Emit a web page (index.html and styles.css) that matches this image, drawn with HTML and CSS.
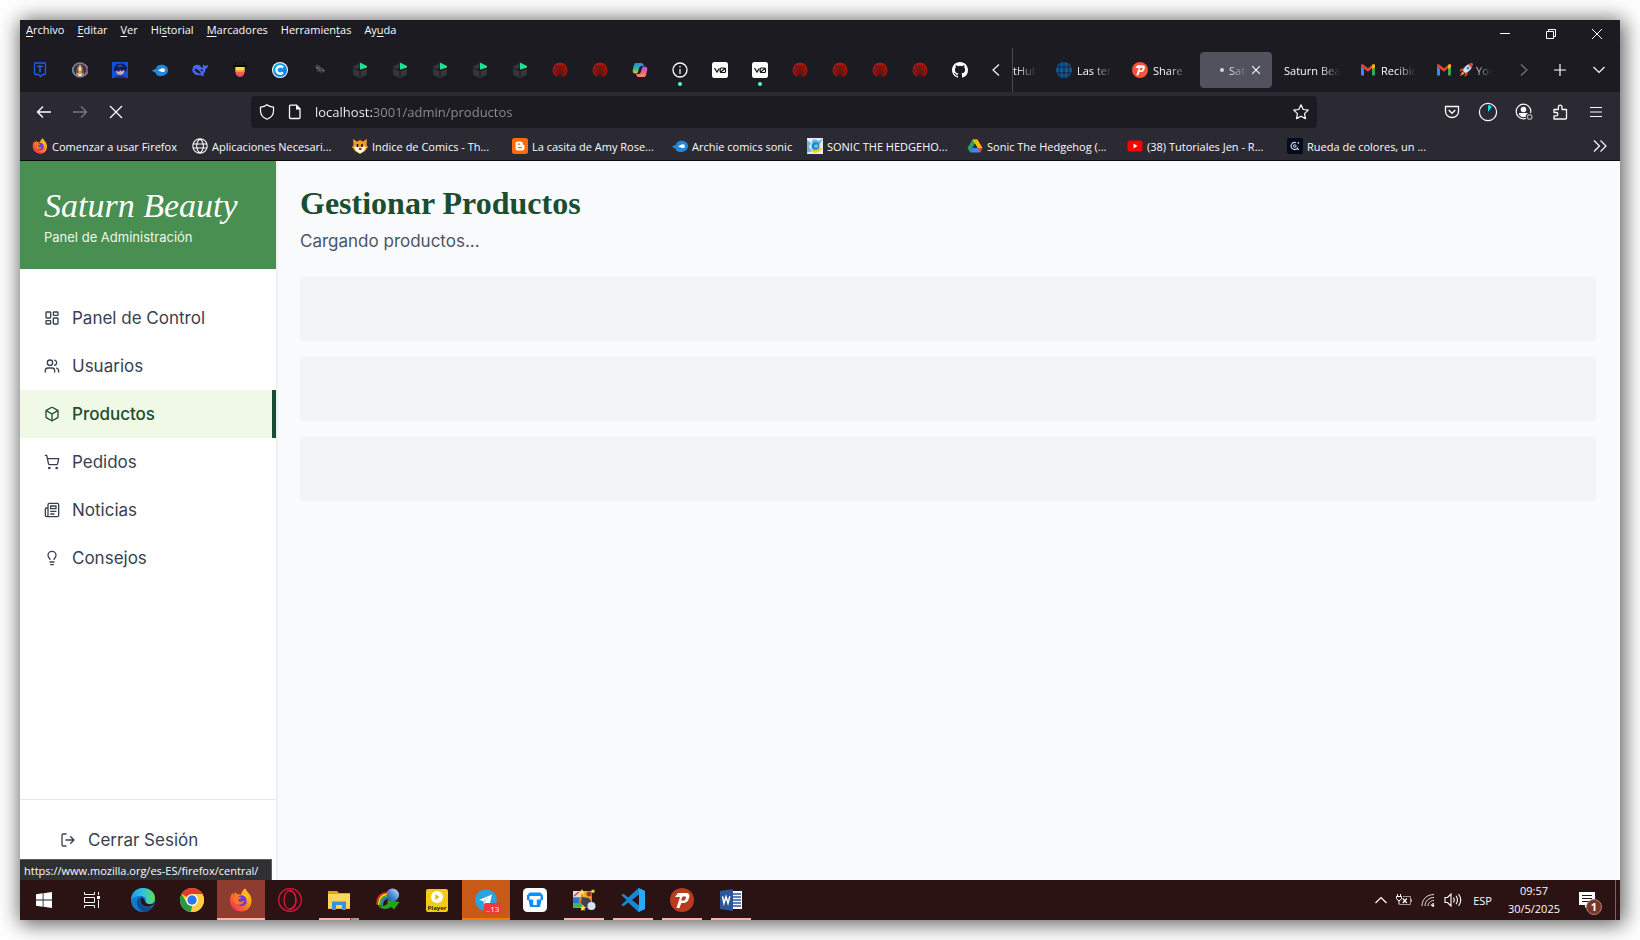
FILE: index.html
```html
<!DOCTYPE html>
<html lang="es">
<head>
<meta charset="utf-8">
<title>Saturn Beauty - Panel de Administración</title>
<link rel="stylesheet" href="styles.css">
</head>
<body>
<svg class="defs" aria-hidden="true">
  <defs>
    <linearGradient id="g-ff" x1="1" y1="0" x2="0" y2="1"><stop offset="0" stop-color="#ffe226"/><stop offset=".45" stop-color="#ff8a16"/><stop offset="1" stop-color="#f5156c"/></linearGradient>
    <linearGradient id="g-edge" x1="0" y1="0" x2="1" y2="0"><stop offset="0" stop-color="#1b9de2"/><stop offset=".5" stop-color="#2fc2df"/><stop offset="1" stop-color="#62dc58"/></linearGradient>
    <linearGradient id="g-cop1" x1="0" y1="0" x2="0" y2="1"><stop offset="0" stop-color="#1c8df0"/><stop offset=".55" stop-color="#35b98d"/><stop offset="1" stop-color="#e8c31e"/></linearGradient>
    <linearGradient id="g-cop2" x1="0" y1="0" x2="0" y2="1"><stop offset="0" stop-color="#a45cf0"/><stop offset=".5" stop-color="#ea5b9a"/><stop offset="1" stop-color="#f9955a"/></linearGradient>
    <linearGradient id="g-globe" x1="1" y1="0" x2="0" y2="1"><stop offset="0" stop-color="#d5ecff"/><stop offset=".5" stop-color="#4d8fd8"/><stop offset="1" stop-color="#1b4a94"/></linearGradient>
    <linearGradient id="g-c" x1="0" y1="0" x2="1" y2="1"><stop offset="0" stop-color="#0bb0f6"/><stop offset="1" stop-color="#0673e0"/></linearGradient>
  </defs>
  <symbol id="box3d" viewBox="0 0 16 16"><path d="M1 4.500 7.500 1v5L4.500 7.200 1 5.800zM1 6.800l6.500 2.500V16L1 12.800zM8.500 9.300 15 6.800v6L8.500 16z" fill="#363638"/><path d="M8 .5 15 4v1.500L8 7.800z" fill="#1fe08f"/></symbol>
  <symbol id="shell" viewBox="0 0 16 16"><path d="M3.500 14A7.500 7.500 0 1 1 12.500 14L11 15H5z" fill="#b4150b"/><path d="M1.300 6.500 5.500 15M3.800 3 6.600 15M6.700 3 7.500 15M9.300 3 8.500 15M12.200 3 9.400 15M14.700 6.500 10.500 15" stroke="#24161a" stroke-width=".9" fill="none"/></symbol>
  <symbol id="vzero" viewBox="0 0 16 16"><rect width="16" height="16" rx="2.500" fill="#fff"/><path d="M2.500 6 5 10 7.200 6.500M9.200 6h3.300a1 1 0 0 1 1 1v2.500a1 1 0 0 1-1 1H9.200a1 1 0 0 1-1-1V7a1 1 0 0 1 1-1zM8.500 10.200l4.700-4" fill="none" stroke="#111" stroke-width="1.200"/></symbol>
  <symbol id="comet" viewBox="0 0 16 16"><path d="M0 8.500 5 6C3.500 6 4.500 4 7 3.200 12 1.700 16 4.500 16 8s-3 6-7.500 6C5.500 14 3.500 12 4 11L1 9.500z" fill="#2587d8"/><path d="M6 8.200C8.500 7.200 9.500 6.300 11 6.300a1.900 1.900 0 1 1 0 3.800C9.500 10.100 8.500 9.300 6 8.200z" fill="#fff"/></symbol>
  <symbol id="gmail" viewBox="0 0 16 16"><path d="M1 4v9.500h3V7z" fill="#4285f4"/><path d="M12 7v6.500h3V4z" fill="#34a853"/><path d="M1 3.500C1 2 2.700 2 3.500 2.700L8 6.200l4.500-3.500C13.400 2 15 2 15 3.600L8 9.800 1 4.500z" fill="#ea4335"/><path d="M12 3.100C13.500 1.800 15 2.200 15 4v1L12 7.300z" fill="#fbbc04"/></symbol>
  <symbol id="firefox" viewBox="0 0 24 24"><path d="M16.500.5c.5 2.700 3 4 4.500 6.500C25 15 20.500 23.500 12.500 23.500 5.500 23.500 1 18.500 1 12.500 1 9.500 2 7 3.500 4.500l.7 2.700C5 5.500 6 4.500 7.200 4l.3 2.500c1.700-.7 3.300-.2 4.500.3C12 4.500 14 1.500 16.500.5z" fill="url(#g-ff)"/><circle cx="12.500" cy="12.800" r="5.500" fill="#743bd3"/><path d="M4.500 8c2.500-1 4 .5 7.500 1.200 1 .8-2.500 1.500-3 2.800 1 2.500 4 2 6.500 1-1.500 4.500-7.500 5-10.500 1z" fill="#ff751d"/><path d="M13 6.500c4 .7 5.500 4 4.500 7.500 2.500-2 2-6-1-9z" fill="#ffc21e"/></symbol>
  <symbol id="parrot" viewBox="0 0 24 24"><path d="M8 5h8.500a3 3 0 0 1 2.800 4l-1 3a4.500 4.500 0 0 1-4 3h-3L9.500 20H6.500L10 9H5M12.500 8.500l-1.500 4h2.700c1 0 1.500-.6 1.800-1.500l.5-1.300c.2-.8-.2-1.200-1-1.200z" fill="#fff" fill-rule="evenodd"/></symbol>
</svg>

<div class="window">
  <header class="menubar">
    <nav class="menus" aria-label="Menú">
      <button><u>A</u>rchivo</button><button><u>E</u>ditar</button><button><u>V</u>er</button><button>Hi<u>s</u>torial</button><button><u>M</u>arcadores</button><button>Herramien<u>t</u>as</button><button>Ay<u>u</u>da</button>
    </nav>
    <div class="caption">
      <button aria-label="Minimizar"><svg width="10" height="10" viewBox="0 0 10 10"><path d="M0 4.500h10" stroke="#fff"/></svg></button>
      <button aria-label="Restaurar"><svg width="10" height="10" viewBox="0 0 10 10"><path d="M.5 2.500h7v7h-7zM2.500 2.500v-2h7v7h-2" fill="none" stroke="#fff"/></svg></button>
      <button aria-label="Cerrar"><svg width="10" height="10" viewBox="0 0 10 10"><path d="M0 0 10 10M10 0 0 10" stroke="#fff"/></svg></button>
    </div>
  </header>

  <div class="tabstrip">
    <div class="pinned">
      <button aria-label="T"><svg class="i16" viewBox="0 0 16 16"><path d="M3.500 1h9a1 1 0 0 1 1 1v9.500a1 1 0 0 1-1 1H10.500L8.500 14.800 6.500 12.500H3.500a1 1 0 0 1-1-1V2a1 1 0 0 1 1-1z" fill="none" stroke="#1f5fe8" stroke-width="1.300"/><path d="M5.200 4.200h5.600M8 4.200v6.300" stroke="#1f5fe8" stroke-width="1.600"/></svg></button>
      <button aria-label="Retrato"><svg class="i16" viewBox="0 0 16 16"><circle cx="8" cy="8" r="7" fill="#35303c" stroke="#8d74a8" stroke-width="1.500"/><path d="M3 13a6 6 0 0 1 0-10" fill="none" stroke="#4cae83" stroke-width="1"/><path d="M13 13.500a6 6 0 0 0 0-11" fill="none" stroke="#c9657a" stroke-width="1"/><path d="M4 13C5 10 4 3 8 2.500c4 .5 3 7.500 4 10.500L8 14z" fill="#c09c58"/><path d="M5.500 11C6 8 5.500 5 7 4M10.500 11C10 8 10.500 5 9 4" fill="none" stroke="#4a3a30"/><ellipse cx="8" cy="6.800" rx="1.500" ry="2.200" fill="#f3d6c2"/><path d="M6 14c.5-3 3.500-3 4 0z" fill="#f6efe9"/></svg></button>
      <button aria-label="Anime"><svg class="i16" viewBox="0 0 16 16"><path d="M0 0h16v16H0z" fill="#1750d8"/><path d="M1.500 7 4.500 2l7-.5 3.500 4-1 4-6-2-5 2z" fill="#12194e"/><path d="M5 3.500 9 3M6 5l5-1" stroke="#3a62d0" stroke-width=".8"/><path d="M4 8.500 12.500 8l-1 3.500-3 1.500L5 12z" fill="#d9a9a8"/><path d="M3 7.500 7 10l1-2 2 1.500L13 6.500l-1 1-3-1-5 1z" fill="#1c2463"/><path d="M2 16c1-3 11-3 12 0z" fill="#21307a"/></svg></button>
      <button aria-label="Cometa"><svg class="i16"><use href="#comet"/></svg></button>
      <button aria-label="Ballena"><svg class="i16" viewBox="0 0 16 16"><path d="M1 5c1-2.500 5-3 7-1.500C8.500 5 10 6 11 5.500 10.500 4 11 3 11.500 2.500c.5 1 1.500 1.300 2 1.300L16 3c0 2-1 3.500-2.500 4 0 2.500-1 4-2.500 5l1.500 1.200C11 14.500 9 13.500 8 13 4 14 0 11 .3 7.500z" fill="#4a66f5"/><path d="M2.500 6.500C5 6.300 7.500 9 9 11.200 6 12 2.800 10 2.500 6.500z" fill="#1c1b22"/><circle cx="9.700" cy="8.300" r="1" fill="#1c1b22"/></svg></button>
      <button aria-label="Vaso"><svg class="i16" viewBox="0 0 16 16"><path d="M1 4h14M3 1.500h1M11 1.500h1" stroke="#050505" stroke-width="1.500"/><path d="M3.500 5h9v5a4.500 5 0 0 1-9 0z" fill="#f35462"/><path d="M3.500 5h9v3.500h-9z" fill="#ffe52e"/><path d="M3.500 8.500h9v1.700h-9z" fill="#ff9b45"/></svg></button>
      <button aria-label="C"><svg class="i16" viewBox="0 0 16 16"><circle cx="8" cy="8" r="8" fill="#fff"/><circle cx="8" cy="8" r="7" fill="url(#g-c)"/><path d="M11 5.600A3.700 3.700 0 1 0 11 10.400" fill="none" stroke="#fff" stroke-width="2.400"/></svg></button>
      <button aria-label="Dragón"><svg class="i16" viewBox="0 0 16 16"><path d="M3.500 4.500 6 3.500l2.500 2 1 3.500 3-1-1.500 2.500M4 7l3-1M5 9.500l2.500-2 1 3M7 5v4M10 6l1 2M4 5.500h3" fill="none" stroke="#66656b" stroke-width="1"/></svg></button>
      <button aria-label="Caja"><svg class="i16"><use href="#box3d"/></svg></button>
      <button aria-label="Caja"><svg class="i16"><use href="#box3d"/></svg></button>
      <button aria-label="Caja"><svg class="i16"><use href="#box3d"/></svg></button>
      <button aria-label="Caja"><svg class="i16"><use href="#box3d"/></svg></button>
      <button aria-label="Caja"><svg class="i16"><use href="#box3d"/></svg></button>
      <button aria-label="Concha"><svg class="i16"><use href="#shell"/></svg></button>
      <button aria-label="Concha"><svg class="i16"><use href="#shell"/></svg></button>
      <button aria-label="Copilot"><svg class="i16" viewBox="0 0 16 16"><path d="M4 1h5.500c1.500 0 2 1.500 2.500 3H9.500C8 4 7.500 5 7 6.500L6 10c-.5 1-1 1.500-2.500 1.500C1 11.500.3 10 .8 8l1-4.500C2.200 2 2.700 1 4 1z" fill="url(#g-cop1)"/><path d="M12 15H6.500C5 15 4.500 13.500 4 12h2.500C8 12 8.500 11 9 9.500L10 6c.5-1 1-1.500 2.500-1.500C15 4.500 15.700 6 15.200 8l-1 4.500C13.800 14 13.300 15 12 15z" fill="url(#g-cop2)"/></svg></button>
      <button class="alert" aria-label="Información"><svg class="i16" viewBox="0 0 16 16"><circle cx="8" cy="8" r="7" fill="none" stroke="#fbfbfe" stroke-width="1.300"/><path d="M8 7v5M8 4v1.500" stroke="#fbfbfe" stroke-width="1.200"/></svg></button>
      <button aria-label="v0"><svg class="i16"><use href="#vzero"/></svg></button>
      <button class="alert" aria-label="v0"><svg class="i16"><use href="#vzero"/></svg></button>
      <button aria-label="Concha"><svg class="i16"><use href="#shell"/></svg></button>
      <button aria-label="Concha"><svg class="i16"><use href="#shell"/></svg></button>
      <button aria-label="Concha"><svg class="i16"><use href="#shell"/></svg></button>
      <button aria-label="Concha"><svg class="i16"><use href="#shell"/></svg></button>
      <button aria-label="GitHub"><svg class="i16" viewBox="0 0 16 16"><path fill="#fff" d="M8 0C3.580 0 0 3.580 0 8c0 3.540 2.290 6.530 5.470 7.590.4.070.55-.17.55-.38 0-.19-.01-.82-.01-1.490-2.010.37-2.530-.49-2.690-.94-.09-.23-.48-.94-.82-1.130-.28-.15-.68-.52-.01-.53.63-.01 1.080.58 1.230.82.72 1.210 1.870.87 2.330.66.07-.52.28-.87.51-1.070-1.780-.2-3.640-.89-3.640-3.950 0-.87.31-1.590.82-2.150-.08-.2-.36-1.020.08-2.120 0 0 .67-.21 2.200.82a7.500 7.500 0 0 1 4 0c1.530-1.040 2.200-.82 2.200-.82.44 1.100.16 1.920.08 2.120.51.56.82 1.270.82 2.150 0 3.070-1.870 3.750-3.650 3.950.29.25.54.73.54 1.480 0 1.070-.01 1.930-.01 2.200 0 .21.15.46.55.38A8 8 0 0 0 16 8c0-4.420-3.580-8-8-8z"/></svg></button>
    </div>
    <button class="scroll" aria-label="Desplazar a la izquierda"><svg width="8" height="12" viewBox="0 0 8 12"><path d="M7 .5 1 6l6 5.500" fill="none" stroke="#fbfbfe" stroke-width="1.200"/></svg></button>
    <div class="tabs">
      <button class="tab first"><span class="fade">tHub</span></button>
      <button class="tab"><svg class="i16" viewBox="0 0 16 16"><circle cx="8" cy="8" r="8" fill="#0c5a9b"/><path d="M0 5h16M0 11h16M8 0v16M4 1.500q-2 6.500 0 13M12 1.500q2 6.500 0 13" fill="none" stroke="#1c1b22" stroke-width=".8"/></svg><span class="fade">Las ten</span></button>
      <button class="tab"><svg class="i16" viewBox="0 0 24 24"><circle cx="12" cy="12" r="12" fill="#f2553d"/><use href="#parrot"/></svg><span class="fade">Share</span></button>
      <button class="tab active"><i class="dot"></i><span class="fade">Satur</span><svg width="8" height="8" viewBox="0 0 8 8"><path d="M0 0 8 8M8 0 0 8" stroke="#fbfbfe" stroke-width="1.100"/></svg></button>
      <button class="tab"><span class="fade">Saturn Beau</span></button>
      <button class="tab"><svg class="i16"><use href="#gmail"/></svg><span class="fade">Recibid</span></button>
      <button class="tab"><svg class="i16"><use href="#gmail"/></svg><svg class="rocket" width="14" height="14" viewBox="0 0 14 14"><path d="M13.500.5C9 .5 6 3 3.500 7.500l3 3C11 8 13.500 5 13.500.5z" fill="#d7e2e8"/><path d="M13.500.5c-2 0-3 .2-4.500 1l3.500 3.500c.8-1.500 1-2.500 1-4.500zM5.500 4.500 1.500 6 .5 9l4-2zM9.500 8.500 8 12.500l-3 1 2-4z" fill="#e2432e"/><circle cx="9" cy="5" r="1.500" fill="#2693e6"/><path d="M3.500 8.500 1 13l4.500-2.500z" fill="#ffb02e"/></svg><span class="fade">You</span></button>
    </div>
    <button class="tool" aria-label="Desplazar a la derecha"><svg width="8" height="12" viewBox="0 0 8 12"><path d="M1 .5 7 6l-6 5.500" fill="none" stroke="#77767e" stroke-width="1.200"/></svg></button>
    <button class="tool" aria-label="Nueva pestaña"><svg width="12" height="12" viewBox="0 0 12 12"><path d="M6 0v12M0 6h12" stroke="#fbfbfe" stroke-width="1.200"/></svg></button>
    <button class="tool wide" aria-label="Listar pestañas"><svg width="12" height="8" viewBox="0 0 12 8"><path d="M.5 1 6 6.500 11.500 1" fill="none" stroke="#fbfbfe" stroke-width="1.200"/></svg></button>
  </div>

  <div class="navbar">
    <div class="navbtns">
      <button aria-label="Atrás"><svg class="i16" viewBox="0 0 16 16"><path d="M15 8H1.500M7 2.500 1.500 8 7 13.500" fill="none" stroke="#fbfbfe" stroke-width="1.400"/></svg></button>
      <button aria-label="Adelante"><svg class="i16" viewBox="0 0 16 16"><path d="M1 8h13.500M9 2.500 14.500 8 9 13.500" fill="none" stroke="#77767e" stroke-width="1.400"/></svg></button>
      <button aria-label="Detener"><svg class="i16" viewBox="0 0 16 16"><path d="M2 2l12 12M14 2 2 14" stroke="#fbfbfe" stroke-width="1.300"/></svg></button>
    </div>
    <div class="urlbar">
      <svg class="i16" viewBox="0 0 16 16"><path d="M8 .8C6.300 2.300 4 3 1.500 3.200V7c0 4 2.500 6.700 6.500 8.300C12 13.700 14.500 11 14.500 7V3.200C12 3 9.700 2.300 8 .8z" fill="none" stroke="#fbfbfe" stroke-width="1.200"/></svg>
      <svg class="i16" viewBox="0 0 16 16"><path d="M3.500 1.200H9.500L13 4.700V13.500a1 1 0 0 1-1 1H3.500a1 1 0 0 1-1-1v-11.300a1 1 0 0 1 1-1z" fill="none" stroke="#fbfbfe" stroke-width="1.300"/><path d="M9 1v4.500h4.500z" fill="#fbfbfe"/></svg>
      <input class="url" type="text" aria-label="Dirección" value="localhost:3001/admin/productos">
      <button aria-label="Añadir a marcadores"><svg class="i16" viewBox="0 0 16 16"><path d="m8 .8 2.200 4.700 5.100.6-3.800 3.500 1 5L8 12.200l-4.500 2.400 1-5L.7 6.100l5.100-.6z" fill="none" stroke="#fbfbfe" stroke-width="1.200" stroke-linejoin="round"/></svg></button>
    </div>
    <div class="actions">
      <button aria-label="Pocket"><svg class="i16" viewBox="0 0 16 16"><path d="M1.500 2.500h13V7.500a6.500 6 0 0 1-13 0z" fill="none" stroke="#fbfbfe" stroke-width="1.300" stroke-linejoin="round"/><path d="M4.700 6 8 9.200 11.300 6" fill="none" stroke="#fbfbfe" stroke-width="1.400"/></svg></button>
      <button aria-label="Progreso"><svg width="20" height="20" viewBox="0 0 20 20"><circle cx="10" cy="10" r="8.600" fill="none" stroke="#fbfbfe" stroke-width="1.200"/><path d="M10 10V3a7 7 0 0 1 4 1.500z" fill="#00ddff"/></svg></button>
      <button aria-label="Cuenta"><svg width="18" height="18" viewBox="0 0 18 18"><circle cx="8.500" cy="8.500" r="7.300" fill="none" stroke="#fbfbfe" stroke-width="1.200"/><circle cx="8.500" cy="6.500" r="2.800" fill="#fbfbfe"/><path d="M4 10h9v1.500L10.500 14h-4L4 11.500z" fill="#fbfbfe"/><circle cx="14.700" cy="14" r="4" fill="#2b2a33"/><circle cx="14.700" cy="14" r="2.300" fill="none" stroke="#a5a4ac" stroke-width="1.300"/></svg></button>
      <button aria-label="Extensiones"><svg class="i16" viewBox="0 0 16 16"><path d="M2 15h11.500a1 1 0 0 0 1-1V5.500H10V3a1.800 1.800 0 0 0-3.600 0v2.500H2V8.500h2.200a1.600 1.600 0 0 1 0 3.300H2z" fill="none" stroke="#fbfbfe" stroke-width="1.300" stroke-linejoin="round"/></svg></button>
      <button aria-label="Menú de aplicación"><svg width="12" height="12" viewBox="0 0 12 12"><path d="M0 1.500h12M0 6h12M0 10.500h12" stroke="#fbfbfe" stroke-width="1.200"/></svg></button>
    </div>
  </div>

  <div class="bookmarks">
    <a href="#"><svg class="i16"><use href="#firefox"/></svg>Comenzar a usar Firefox</a>
    <a href="#"><svg class="i16" viewBox="0 0 16 16"><path d="M8 .8a7.200 7.200 0 1 0 0 14.400A7.200 7.200 0 0 0 8 .8zM8 1C3.500 4.500 3.500 11.500 8 15M8 1c4.500 3.500 4.500 10.500 0 14M1 6h14M1 10h14" fill="none" stroke="#fbfbfe" stroke-width="1.100"/></svg>Aplicaciones Necesari...</a>
    <a href="#"><svg class="i16" viewBox="0 0 16 16"><path d="M1 1 5 3.500 8 2l3 1.500L15 1l-.5 6L16 9l-3 4-5 3-5-3-3-4 1.500-2z" fill="#f59a22"/><path d="m2 9 4-1 2 2 2-2 4 1-2 4-4 2.500L4 13z" fill="#fff6df"/><path d="M5.500 6v3M10 6v3M7 11h2.500" stroke="#191510" stroke-width="1.600"/></svg>Indice de Comics - Th...</a>
    <a href="#"><svg class="i16" viewBox="0 0 16 16"><rect width="16" height="16" rx="2.500" fill="#ff6a0c"/><path d="M5.500 3.500H8.500a2.300 2.300 0 0 1 2.300 2.300c0 .8.400 1.200 1.700 1.200v3a2.500 2.500 0 0 1-2.500 2.500h-4.500a2 2 0 0 1-2-2v-5a2 2 0 0 1 2-2z" fill="#fff"/><path d="M5.800 6.200h2.400M5.800 9.700h4" stroke="#ff6a0c" stroke-width="1.200"/></svg>La casita de Amy Rose...</a>
    <a href="#" class="short"><svg class="i16"><use href="#comet"/></svg>Archie comics sonic</a>
    <a href="#"><svg class="i16" viewBox="0 0 16 16"><path d="M0 0h16v16H0z" fill="#e5eff8"/><path d="m0 2 4 3-2 4L5 13l-5 2zM16 0l-4 3-5-2-3 3 9 2z" fill="#6fb4e5"/><circle cx="8.500" cy="8" r="4" fill="#2188d2"/><path d="M7 7.500 10 6l1.500 3L8 10z" fill="#73d0b7"/><path d="M4 10c2 3 7 3 10-1l1 2c-2 4-8 5-11 2z" fill="#f1cf24"/></svg>SONIC THE HEDGEHO...</a>
    <a href="#"><svg class="i16" viewBox="0 0 16 16"><path d="M5.500 1.500h5L5.500 10 3 14.500.5 10z" fill="#22a565"/><path d="M5.500 1.500h5l5 8.500h-5z" fill="#ffba00"/><path d="M5.500 10h10L13 14.500H3z" fill="#4285f4"/><path d="m5.500 10 2.600-4.300L10.500 10z" fill="#2b2a33"/><path d="M10.500 10h5L13 14.500z" fill="#ea4335"/></svg>Sonic The Hedgehog (...</a>
    <a href="#"><svg class="i16" viewBox="0 0 16 16"><rect y="2.500" x=".5" width="15" height="11" rx="2.500" fill="#f00"/><path d="m6.500 5.500 4 2.500-4 2.500z" fill="#fff"/></svg>(38) Tutoriales Jen - R...</a>
    <a href="#"><svg class="i16" viewBox="0 0 16 16"><rect width="16" height="16" rx="2" fill="#020a1d"/><path d="M9 4.700A3.500 3.500 0 1 0 10.800 9.500M9.500 10.500l2.500 1.200" fill="none" stroke="#d4d9e4" stroke-width="1.100"/><circle cx="7.800" cy="8" r="1.300" fill="none" stroke="#d4d9e4"/><circle cx="11.300" cy="4.800" r=".9" fill="#d4d9e4"/></svg>Rueda de colores, un ...</a>
    <button aria-label="Más marcadores"><svg width="14" height="12" viewBox="0 0 14 12"><path d="m1 .5 5.500 5.500L1 11.500M7.500.5 13 6l-5.500 5.500" fill="none" stroke="#fbfbfe" stroke-width="1.200"/></svg></button>
  </div>

  <div class="page">
    <aside class="sidebar">
      <div class="brand">
        <div class="brand-name">Saturn Beauty</div>
        <div class="brand-sub">Panel de Administración</div>
      </div>
      <nav class="sidenav" aria-label="Administración">
        <a href="#"><svg class="line" viewBox="0 0 24 24"><rect width="7" height="9" x="3" y="3" rx="1"/><rect width="7" height="5" x="14" y="3" rx="1"/><rect width="7" height="9" x="14" y="12" rx="1"/><rect width="7" height="5" x="3" y="16" rx="1"/></svg>Panel de Control</a>
        <a href="#"><svg class="line" viewBox="0 0 24 24"><path d="M16 21v-2a4 4 0 0 0-4-4H6a4 4 0 0 0-4 4v2"/><circle cx="9" cy="7" r="4"/><path d="M22 21v-2a4 4 0 0 0-3-3.870M16 3.130a4 4 0 0 1 0 7.750"/></svg>Usuarios</a>
        <a href="#" class="current" aria-current="page"><svg class="line" viewBox="0 0 24 24"><path d="M21 8a2 2 0 0 0-1-1.730l-7-4a2 2 0 0 0-2 0l-7 4A2 2 0 0 0 3 8v8a2 2 0 0 0 1 1.730l7 4a2 2 0 0 0 2 0l7-4A2 2 0 0 0 21 16Z"/><path d="m3.300 7 8.700 5 8.700-5M12 22V12"/></svg>Productos</a>
        <a href="#"><svg class="line" viewBox="0 0 24 24"><circle cx="8" cy="21" r="1"/><circle cx="19" cy="21" r="1"/><path d="M2.050 2.050h2l2.660 12.420a2 2 0 0 0 2 1.580h9.780a2 2 0 0 0 1.950-1.570l1.650-7.430H5.120"/></svg>Pedidos</a>
        <a href="#"><svg class="line" viewBox="0 0 24 24"><path d="M4 22h16a2 2 0 0 0 2-2V4a2 2 0 0 0-2-2H8a2 2 0 0 0-2 2v16a2 2 0 0 1-2 2Zm0 0a2 2 0 0 1-2-2v-9c0-1.100.9-2 2-2h2M18 14h-8M15 18h-5M10 6h8v4h-8V6Z"/></svg>Noticias</a>
        <a href="#"><svg class="line" viewBox="0 0 24 24"><path d="M15 14c.2-1 .7-1.700 1.500-2.500 1-.9 1.500-2.200 1.500-3.500A6 6 0 0 0 6 8c0 1 .2 2.200 1.500 3.500.7.7 1.300 1.500 1.500 2.500M9 18h6M10 22h4"/></svg>Consejos</a>
      </nav>
      <div class="logout">
        <button><svg class="line" viewBox="0 0 24 24"><path d="M9 21H5a2 2 0 0 1-2-2V5a2 2 0 0 1 2-2h4M16 17l5-5-5-5M21 12H9"/></svg>Cerrar Sesión</button>
      </div>
    </aside>
    <main class="content">
      <h1>Gestionar Productos</h1>
      <p>Cargando productos...</p>
      <div class="skeletons"><div></div><div></div><div></div></div>
    </main>
    <div class="status">https://www.mozilla.org/es-ES/firefox/central/</div>
  </div>

  <footer class="taskbar">
    <div class="system">
      <button aria-label="Inicio"><svg width="16" height="16" viewBox="0 0 16 16"><path d="M0 2.300 6.700 1.300V7.600H0zM7.500 1.200 16 0v7.600H7.500zM0 8.400h6.700v6.300L0 13.700zM7.500 8.400H16V16l-8.500-1.200z" fill="#fff"/></svg></button>
      <button aria-label="Vista de tareas"><svg width="16" height="16" viewBox="0 0 16 16"><path d="M.5 0v2.500h10V0M.5 16v-2.500h10V16M.5 5.500h10v5H.5zM14.500 0v3M14.500 8v8" fill="none" stroke="#fff"/><path d="M13 4h3v3h-3z" fill="#fff"/></svg></button>
    </div>
    <div class="apps">
      <button aria-label="Edge"><svg class="i24" viewBox="0 0 24 24"><circle cx="12" cy="12" r="12" fill="#1479cf"/><path d="M0 12C0 5 5 0 12 0s12 4.500 12 10c0 4-3 6-6 6-2.500 0-4-1-3.500-2.500 1.500-3-1-5.500-4.500-5.500C5 8 1 10 0 12z" fill="url(#g-edge)"/><path d="M9.500 9C4.500 10.500 4 20 12.500 24c4 0 8-2.500 9.500-5.500-4.500 2-9.500 1-12-2.500-1.500-2-1.500-5-.5-7z" fill="#114a8b"/><path d="M14.300 13.500C13 12 13 10 10.500 9c-2 3-1 8 3 9 3.500 1.500 6.500.5 8.500-1l1.500-2c-4 2.500-9 1-9.200-1.500z" fill="#2b1413"/></svg></button>
      <button aria-label="Chrome"><svg class="i24" viewBox="0 0 24 24"><circle cx="12" cy="12" r="12" fill="#ffcd40"/><path d="M12 12 1.600 6A12 12 0 0 1 22.400 6H12z" fill="#e33b2e"/><path d="M1.600 6 6.800 15 12 18l-1 6A12 12 0 0 1 1.600 6z" fill="#279847"/><path d="M12 6h10.400A12 12 0 0 1 11 24l6.200-9z" fill="#ffcd40"/><circle cx="12" cy="12" r="6" fill="#fff"/><circle cx="12" cy="12" r="4.700" fill="#2b78ec"/></svg></button>
      <button class="focused" aria-label="Firefox"><svg class="i24"><use href="#firefox"/></svg></button>
      <button aria-label="Opera"><svg class="i24" viewBox="0 0 24 24"><g fill="none" stroke="#e5173f" stroke-width="1.200"><circle cx="12" cy="12" r="11.300"/><ellipse cx="12" cy="12" rx="6" ry="9.500"/><path d="M10.500 3c9-2 11 18 0 18"/></g></svg></button>
      <button class="open more" aria-label="Explorador de archivos"><svg class="i24" viewBox="0 0 24 24"><path d="M1 3h9l2 2h11v16H1z" fill="#e7a30d"/><path d="M1 6h22v14.500H1z" fill="#ffd55c"/><path d="M5 13.500h14V22h-4v-5H9v5H5z" fill="#3792dc"/></svg></button>
      <button aria-label="IDM"><svg class="i24" viewBox="0 0 24 24"><circle cx="16.500" cy="7" r="6.500" fill="url(#g-globe)"/><g fill="none" stroke-width="1.700"><path d="M11 4.500C4 5.500 .8 10 1 16.500" stroke="#e83123"/><path d="M11 6.200C5.500 7.200 2.500 11 2.700 17" stroke="#ffd51f"/><path d="M11 8C7 9 4.300 12 4.400 17.500" stroke="#4cba30"/><path d="M11.500 9.600C8 10.500 6 13 6.100 18" stroke="#2789e0"/></g><path d="M2 17.500c4 1.500 7 .5 9.500-2V12L23.500 14l-5.500 7.500-2.500-2.500C10 22 5 21.500 2 17.500z" fill="#25a51c"/></svg></button>
      <button class="player" aria-label="Player"><span><svg width="12" height="12" viewBox="0 0 12 12"><circle cx="6" cy="6" r="6" fill="#fff"/><path d="m4.300 3 4.200 3-4.200 3z" fill="#e5b912"/></svg>Player</span></button>
      <button class="notify" aria-label="Telegram"><svg class="i24" viewBox="0 0 24 24"><circle cx="12" cy="12" r="10.800" fill="#2ba3df"/><path d="M5 12 18 6.500l-2.500 10.500-3.500-2.500-2 2-.5-3.500z" fill="#fff"/><path d="m9.500 13 6-4.500L11 14l-1 2.500z" fill="#b5d7eb"/></svg><b>..13</b></button>
      <button aria-label="T"><svg class="i24" viewBox="0 0 24 24"><rect width="24" height="24" rx="4.500" fill="#fff"/><path d="M6.500 4.500h11L20 7.500v4.500h-1.500L17 19H7L5.500 12H4V7.500z" fill="#118dff"/><path d="M6.500 8h11v3.500h-3.700V17h-3.600v-5.500H6.500z" fill="#fff"/></svg></button>
      <button class="open" aria-label="Imágenes"><svg class="i24" viewBox="0 0 24 24"><path d="M1 3h19v17H1z" fill="#e7752b"/><path d="M1 3h8v6H1z" fill="#e7dad3"/><path d="M2 8 7 4" stroke="#d6402e" stroke-width="1.500"/><path d="M10 3h9v8h-9z" fill="#f9a52b"/><circle cx="17" cy="6" r="2.500" fill="#913e22"/><path d="M1 10h6v5H1z" fill="#2b72d8"/><path d="M2 15h7v4H2z" fill="#3cb94b"/><path d="m10 9 7 1 4 8-5 4-7-7z" fill="#3c4353"/><circle cx="19.500" cy="18" r="4" fill="#d1e4fa"/><path d="m10 1 1 2 2 .3-1.500 1.500.3 2L10 6 8 7l.4-2.200L7 3.300 9 3zM21 1l.7 1.300 1.500.2-1 1.100.2 1.500L21 4.500l-1.300.6.2-1.500-1-1.100 1.500-.2zM11 17l1 2 2 .3-1.500 1.500.3 2L11 22l-2 .8.400-2L8 19.300l2-.3z" fill="#ffe442"/></svg></button>
      <button class="open" aria-label="Visual Studio Code"><svg class="i24" viewBox="0 0 24 24"><path d="M17.500 0 24 3v18l-6.500 3L7.200 14.500 2.500 18.200.2 17 5.500 12 .2 7l2.300-1.200 4.700 3.700zM18 6.500 11 12l7 5.500z" fill="#1688d2" fill-rule="evenodd"/><path d="M17.500 0 24 3v18l-6.500 3 .5-1.500v-21z" fill="#2ba9f3"/></svg></button>
      <button class="open" aria-label="P"><svg class="i24" viewBox="0 0 24 24"><circle cx="12" cy="12" r="12" fill="#b83b20"/><use href="#parrot"/></svg></button>
      <button class="open" aria-label="Word"><svg class="i24" viewBox="0 0 24 24"><path d="M12 3h11v18H12z" fill="#fff"/><path d="M14 6h8M14 9h8M14 12h8M14 15h8M14 18h8" stroke="#2b579a" stroke-width="1.300"/><path d="M1 3 14 1v22L1 21z" fill="#2b579a"/><path d="m3.500 8.300 1.500 7 2-6.500 2 6.500 1.800-7" fill="none" stroke="#fff" stroke-width="1.500"/></svg></button>
    </div>
    <div class="tray">
      <button aria-label="Mostrar iconos ocultos"><svg width="12" height="8" viewBox="0 0 12 8"><path d="M.5 7 6 1.500 11.500 7" fill="none" stroke="#fff" stroke-width="1.200"/></svg></button>
      <svg width="16" height="14" viewBox="0 0 16 14"><path d="M1.500 1v2.500M4.500 1v2.500M.5 3.500h5v2L4 7.500H2L.5 5.500zM3 7.500v4" fill="none" stroke="#fff"/><path d="M7 3.500h7.500v8H3.500M15.500 6v3" fill="none" stroke="#a49694"/><path d="m6.800 5.500 4 4.500M10.800 5.500l-4 4.500" stroke="#fff" stroke-width="1.200"/></svg>
      <svg width="14" height="14" viewBox="0 0 14 14"><path d="M1 13C1 6 6 1.500 13 1.500M4 13c0-5 4-8.500 9-8.500M7 13c0-3 2.500-5.500 6-5.500M10 13c0-1.500 1-2.500 3-2.500" fill="none" stroke="#e2dcdb"/><circle cx="12" cy="12.500" r="1.300" fill="#fff"/></svg>
      <svg width="18" height="14" viewBox="0 0 18 14"><path d="M1 4.500h2.500L7 1v12L3.500 9.500H1zM9.500 4.500q1.500 2.500 0 5M12 2.700q3 4.300 0 8.600M14.500 1q4.500 6 0 12" fill="none" stroke="#fff" stroke-width="1.100"/></svg>
      <span class="lang">ESP</span>
      <time class="clock"><span>09:57</span><span>30/5/2025</span></time>
      <button class="notes" aria-label="Notificaciones"><svg width="16" height="16" viewBox="0 0 16 16"><path d="M0 0h16v13H9l-3 3v-3H0z" fill="#fff"/><path d="M3 3.500h10M3 6.500h10M3 9.500h7" stroke="#2c1313"/></svg><b>1</b></button>
    </div>
  </footer>
</div>
</body>
</html>
```
FILE: styles.css
```css
* { box-sizing: border-box; }

body {
  margin: 0;
  padding: 20px;
  min-height: 100vh;
  display: flex;
  background: #fff;
  font-family: "Open Sans", "Noto Sans", sans-serif;
  font-size: 11px;
  color: #fbfbfe;
}

button {
  font: inherit;
  color: inherit;
  background: none;
  border: 0;
  padding: 0;
  display: flex;
  align-items: center;
  justify-content: center;
}

a { color: inherit; text-decoration: none; }
svg { display: block; flex: none; }
.defs { position: absolute; width: 0; height: 0; }
.i16 { width: 16px; height: 16px; }
.i24 { width: 24px; height: 24px; }

.window {
  flex: 1;
  min-width: 0;
  display: flex;
  flex-direction: column;
  background: #1c1b22;
  box-shadow: 2px 2px 20px 2px rgba(0, 0, 0, 0.65);
}

/* Browser chrome */
.menubar { display: flex; justify-content: space-between; height: 28px; }
.menus { display: flex; gap: 13px; padding-left: 6px; height: 19px; }
.menus u { text-underline-offset: 2px; }
.caption { display: flex; }
.caption button { width: 46px; }

.tabstrip { display: flex; height: 44px; }
.pinned { display: flex; }
.pinned button { width: 40px; position: relative; }
.alert::after {
  content: "";
  position: absolute;
  bottom: 6px;
  left: 18px;
  width: 4px;
  height: 4px;
  border-radius: 50%;
  background: #54ffbd;
}
.scroll { width: 33px; border-right: 1px solid #4a4950; }
.tabs { display: flex; flex: 1; min-width: 0; overflow: hidden; }
.tab {
  width: 76px;
  height: 36px;
  margin: 4px 0;
  padding: 0 12px 0 8px;
  gap: 5px;
  justify-content: flex-start;
  flex: none;
}
.tab.first { width: 35px; padding: 0 12px 0 0; }
.tab.active {
  width: 72px;
  margin-right: 4px;
  padding-left: 20px;
  border-radius: 4px;
  background: #52525e;
}
.fade {
  flex: 1;
  min-width: 0;
  overflow: hidden;
  white-space: nowrap;
  text-align: left;
  mask-image: linear-gradient(to left, transparent, #000 20px);
}
.dot { width: 4px; height: 4px; border-radius: 50%; background: #d6d6da; flex: none; }
.rocket { margin: 0 -2px 0 2px; }
.tool { width: 36px; }
.tool.wide { width: 42px; }

.navbar {
  display: flex;
  align-items: center;
  height: 40px;
  padding: 0 6px;
  background: #2b2a33;
}
.navbtns { display: flex; }
.navbtns button { width: 36px; height: 32px; }
.urlbar {
  flex: 1;
  display: flex;
  align-items: center;
  gap: 12px;
  height: 32px;
  margin: 0 117px;
  padding: 0 8px;
  border-radius: 4px;
  background: #1c1b22;
}
.url {
  flex: 1;
  min-width: 0;
  border: 0;
  padding: 0;
  outline: 0;
  font: inherit;
  font-size: 13px;
  color: transparent;
  background: linear-gradient(to right, #fbfbfe 57px, #8f8e96 57px);
  background-clip: text;
}
.actions { display: flex; }
.actions button { width: 36px; height: 32px; }

.bookmarks {
  display: flex;
  align-items: center;
  height: 29px;
  padding: 0 13px 0 12px;
  background: #2b2a33;
  border-bottom: 1px solid #0c0c0d;
}
.bookmarks a { width: 160px; display: flex; align-items: center; gap: 4px; white-space: nowrap; }
.bookmarks a.short { width: 135px; }
.bookmarks button { margin-left: auto; }

/* Admin page */
.page {
  position: relative;
  flex: 1;
  min-height: 0;
  display: flex;
  background: #f9fafc;
  font-family: Inter, "Open Sans", sans-serif;
  font-size: 17px;
  color: #374151;
}
.sidebar {
  width: 256px;
  flex: none;
  display: flex;
  flex-direction: column;
  background: #fff;
  box-shadow: 1px 0 2px rgba(0, 0, 0, 0.08);
}
.brand { padding: 24px; height: 108px; background: #4a8f52; color: #fff; }
.brand-name { font: italic 34px/42px "Liberation Serif", serif; white-space: nowrap; }
.brand-sub { font-size: 13px; line-height: 20px; color: #edf7e8; white-space: nowrap; }
.sidenav { flex: 1; padding-top: 25px; }
.sidenav a {
  display: flex;
  align-items: center;
  gap: 12px;
  height: 48px;
  padding: 0 24px;
}
.sidenav .current {
  background: #f0f9e6;
  color: #1b4d30;
  font-weight: 500;
  border-right: 4px solid #1b4d30;
}
.line {
  width: 16px;
  height: 16px;
  fill: none;
  stroke: currentColor;
  stroke-width: 2;
  stroke-linecap: round;
  stroke-linejoin: round;
}
.logout { height: 81px; padding: 16px; border-top: 1px solid #e5e7eb; }
.logout button { height: 48px; padding: 0 24px; gap: 12px; }
.content { flex: 1; padding: 24px; }
.content h1 {
  margin: 0;
  font: bold 32px/36px "Liberation Serif", serif;
  color: #1b4d30;
}
.content p { margin: 8px 0 24px; line-height: 24px; color: #4b5563; }
.skeletons { display: grid; gap: 16px; }
.skeletons div { height: 64px; border-radius: 4px; background: #f3f4f6; }
.status {
  position: absolute;
  left: 0;
  bottom: 0;
  width: 252px;
  height: 21px;
  padding: 0 4px;
  border: 1px solid #5b5b60;
  border-width: 1px 1px 0 0;
  background: #2f3033;
  color: #fbfbfe;
  font: 11px/22px "Open Sans", sans-serif;
  white-space: nowrap;
}

/* Windows taskbar */
.taskbar { display: flex; height: 40px; background: #2c1313; }
.system { display: flex; margin-right: 3px; }
.system button { width: 48px; }
.apps { display: flex; gap: 1px; }
.apps button { width: 48px; position: relative; }
.apps .focused { background: #8e3b30; box-shadow: inset 0 -2px #ffb5a4; }
.apps .notify { background: #c85a18; box-shadow: inset 0 -2px #ff7800; }
.apps .open::after {
  content: "";
  position: absolute;
  left: 4px;
  right: 4px;
  bottom: 0;
  height: 2px;
  background: #ffb5a4;
}
.apps .more::after { background: linear-gradient(to right, #ffb5a4 31px, #6f4842 31px, #6f4842 32px, #c18a7f 32px); }
.notify b {
  position: absolute;
  left: 22px;
  top: 23px;
  padding: 0 2px;
  border-radius: 2px;
  background: #f03a3a;
  font-size: 8px;
  font-weight: 400;
  line-height: 11px;
}
.player span {
  width: 22px;
  height: 23px;
  display: flex;
  flex-direction: column;
  align-items: center;
  justify-content: space-between;
  padding-top: 2px;
  border-radius: 2px;
  background: #f2cb13;
  color: #2b2508;
  font-size: 6px;
  font-weight: 700;
  line-height: 8px;
}
.tray { margin-left: auto; display: flex; align-items: center; gap: 9px; padding-right: 4px; }
.lang { padding-left: 2px; }
.clock {
  display: flex;
  flex-direction: column;
  align-items: center;
  padding: 0 7px;
  line-height: 18px;
}
.notes { position: relative; width: 40px; height: 40px; border-right: 1px solid #7b6664; padding-right: 18px; }
.notes b {
  position: absolute;
  left: 10px;
  top: 19px;
  width: 16px;
  height: 16px;
  border: 1px solid #b28279;
  border-radius: 50%;
  background: #7b3429;
  line-height: 14px;
  text-align: center;
}
```
